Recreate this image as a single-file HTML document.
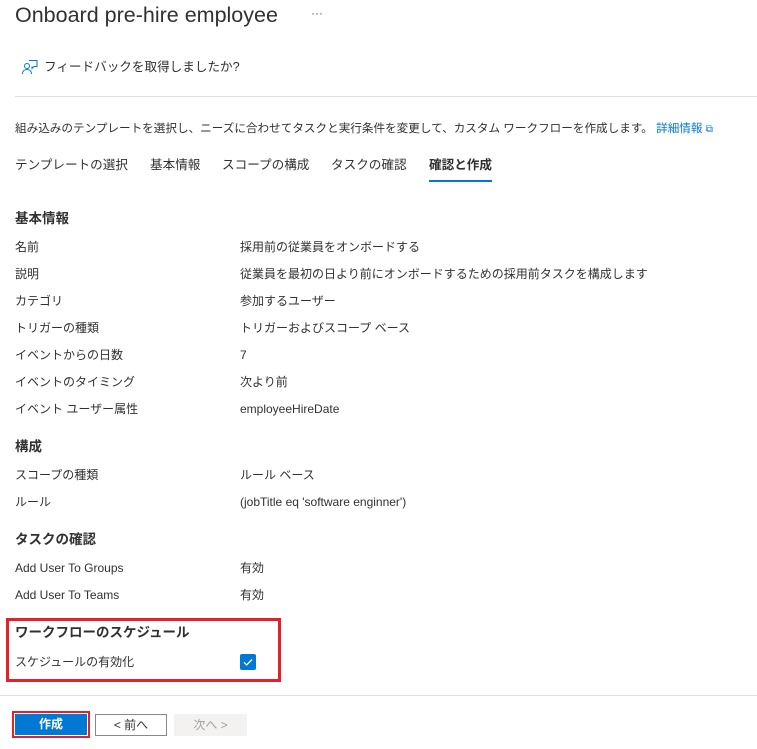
<!DOCTYPE html>
<html><head><meta charset="utf-8"><style>
*{margin:0;padding:0;box-sizing:border-box}
body{width:757px;height:749px;background:#fff;font-family:"Liberation Sans","Noto Sans CJK JP",sans-serif;color:#323130;position:relative;overflow:hidden}
.a{position:absolute;white-space:nowrap;line-height:17px}
.r{font-size:12px;color:#323130}
.h{font-size:13.5px;font-weight:bold;color:#323130}
.t{font-size:12.6px;color:#323130}
</style></head><body>
<div class="a" style="left:15px;top:2px;font-size:21.5px;line-height:26px;color:#323130">Onboard pre-hire employee</div>
<div class="a" style="left:311px;top:5px;font-size:12px;color:#605e5c">···</div>
<svg class="a" style="left:21px;top:58px" width="18" height="18" viewBox="0 0 18 18" fill="none" stroke="#0078d4" stroke-width="1"><circle cx="6" cy="8" r="2.5"/><path d="M1.5 16c0-3 2-4.5 4.5-4.5s4.5 1.5 4.5 4.5"/><path d="M8 2.5h8v6h-3l-2 2v-2"/></svg>
<div class="a t" style="left:44px;top:59px">フィードバックを取得しましたか?</div>
<div class="a" style="left:15px;top:96px;width:742px;height:1px;background:#e1dfdd"></div>
<div class="a r" style="left:15px;top:120px;font-size:11.6px">組み込みのテンプレートを選択し、ニーズに合わせてタスクと実行条件を変更して、カスタム ワークフローを作成します。 <span style="color:#0078d4">詳細情報 <span style="font-size:10px">⧉</span></span></div>
<div class="a t" style="left:15px;top:157px">テンプレートの選択</div>
<div class="a t" style="left:150px;top:157px">基本情報</div>
<div class="a t" style="left:222px;top:157px">スコープの構成</div>
<div class="a t" style="left:331px;top:157px">タスクの確認</div>
<div class="a t" style="left:429px;top:157px;font-weight:bold">確認と作成</div>
<div class="a" style="left:429px;top:180px;width:63px;height:2px;background:#0078d4"></div>

<div class="a h" style="left:15px;top:210px">基本情報</div>
<div class="a r" style="left:15px;top:239px">名前</div><div class="a r" style="left:240px;top:239px">採用前の従業員をオンボードする</div>
<div class="a r" style="left:15px;top:266px">説明</div><div class="a r" style="left:240px;top:266px">従業員を最初の日より前にオンボードするための採用前タスクを構成します</div>
<div class="a r" style="left:15px;top:293px">カテゴリ</div><div class="a r" style="left:240px;top:293px">参加するユーザー</div>
<div class="a r" style="left:15px;top:320px">トリガーの種類</div><div class="a r" style="left:240px;top:320px">トリガーおよびスコープ ベース</div>
<div class="a r" style="left:15px;top:347px">イベントからの日数</div><div class="a r" style="left:240px;top:347px">7</div>
<div class="a r" style="left:15px;top:374px">イベントのタイミング</div><div class="a r" style="left:240px;top:374px">次より前</div>
<div class="a r" style="left:15px;top:401px">イベント ユーザー属性</div><div class="a r" style="left:240px;top:401px">employeeHireDate</div>

<div class="a h" style="left:15px;top:438px">構成</div>
<div class="a r" style="left:15px;top:467px">スコープの種類</div><div class="a r" style="left:240px;top:467px">ルール ベース</div>
<div class="a r" style="left:15px;top:494px">ルール</div><div class="a r" style="left:240px;top:494px">(jobTitle eq 'software enginner')</div>

<div class="a h" style="left:15px;top:531px">タスクの確認</div>
<div class="a r" style="left:15px;top:560px">Add User To Groups</div><div class="a r" style="left:240px;top:560px">有効</div>
<div class="a r" style="left:15px;top:587px">Add User To Teams</div><div class="a r" style="left:240px;top:587px">有効</div>

<div class="a" style="left:6px;top:618px;width:275px;height:64px;border:3px solid #e3202b"></div>
<div class="a h" style="left:15px;top:624px">ワークフローのスケジュール</div>
<div class="a r" style="left:15px;top:654px">スケジュールの有効化</div>
<div class="a" style="left:240px;top:654px;width:16px;height:16px;background:#0078d4;border-radius:2px"><svg width="16" height="16" viewBox="0 0 16 16"><path d="M4 8.3l2.6 2.6L12 5.5" stroke="#fff" stroke-width="1.3" fill="none"/></svg></div>

<div class="a" style="left:0;top:695px;width:757px;height:1px;background:#e1dfdd"></div>
<div class="a" style="left:12px;top:711px;width:78px;height:27px;border:2px solid #e3202b"></div>
<div class="a" style="left:15px;top:714px;width:72px;height:21px;background:#0078d4;color:#fff;font-size:12px;font-weight:bold;text-align:center;line-height:21px">作成</div>
<div class="a" style="left:95px;top:714px;width:72px;height:22px;border:1px solid #8a8886;font-size:12px;text-align:center;line-height:20px">&lt; 前へ</div>
<div class="a" style="left:174px;top:714px;width:73px;height:22px;background:#f3f2f1;color:#a19f9d;font-size:12px;text-align:center;line-height:22px">次へ &gt;</div>
</body></html>
